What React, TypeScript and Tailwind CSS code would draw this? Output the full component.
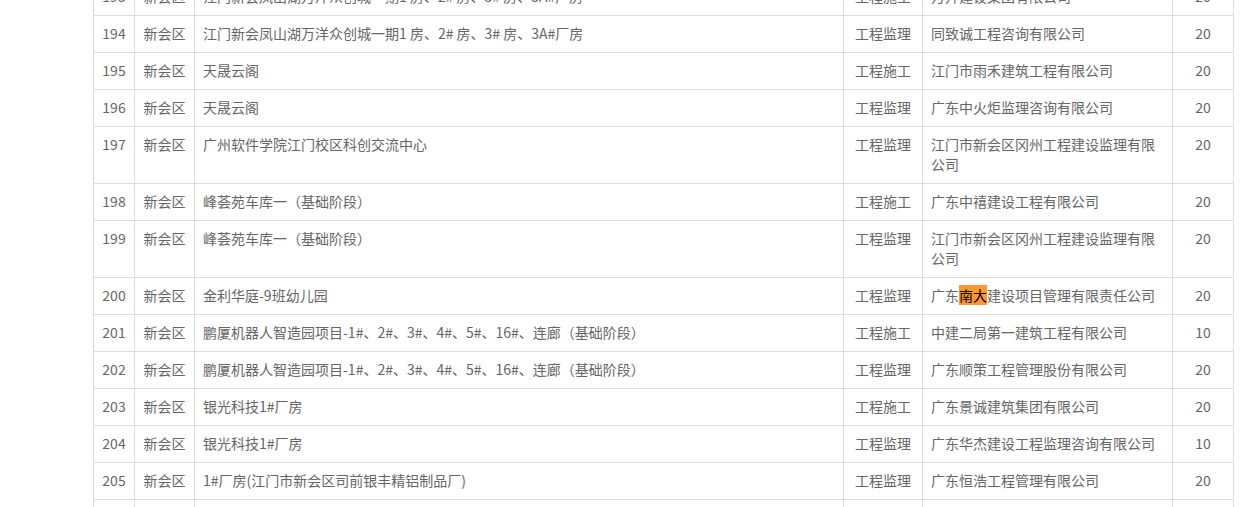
import React from "react";

type Row = {
  no: string;
  area: string;
  project: string;
  type: string;
  company: React.ReactNode;
  score: string;
};

const rows: Row[] = [
  { no: "193", area: "新会区", project: "江门新会凤山湖万洋众创城一期1 房、2# 房、3# 房、3A#厂房", type: "工程施工", company: "万升建设集团有限公司", score: "20" },
  { no: "194", area: "新会区", project: "江门新会凤山湖万洋众创城一期1 房、2# 房、3# 房、3A#厂房", type: "工程监理", company: "同致诚工程咨询有限公司", score: "20" },
  { no: "195", area: "新会区", project: "天晟云阁", type: "工程施工", company: "江门市雨禾建筑工程有限公司", score: "20" },
  { no: "196", area: "新会区", project: "天晟云阁", type: "工程监理", company: "广东中火炬监理咨询有限公司", score: "20" },
  { no: "197", area: "新会区", project: "广州软件学院江门校区科创交流中心", type: "工程监理", company: "江门市新会区冈州工程建设监理有限公司", score: "20" },
  { no: "198", area: "新会区", project: "峰荟苑车库一（基础阶段）", type: "工程施工", company: "广东中禧建设工程有限公司", score: "20" },
  { no: "199", area: "新会区", project: "峰荟苑车库一（基础阶段）", type: "工程监理", company: "江门市新会区冈州工程建设监理有限公司", score: "20" },
  {
    no: "200",
    area: "新会区",
    project: "金利华庭-9班幼儿园",
    type: "工程监理",
    company: (
      <>
        广东<span className="bg-[#ff9632] text-black">南大</span>建设项目管理有限责任公司
      </>
    ),
    score: "20",
  },
  { no: "201", area: "新会区", project: "鹏厦机器人智造园项目-1#、2#、3#、4#、5#、16#、连廊（基础阶段）", type: "工程施工", company: "中建二局第一建筑工程有限公司", score: "10" },
  { no: "202", area: "新会区", project: "鹏厦机器人智造园项目-1#、2#、3#、4#、5#、16#、连廊（基础阶段）", type: "工程监理", company: "广东顺策工程管理股份有限公司", score: "20" },
  { no: "203", area: "新会区", project: "银光科技1#厂房", type: "工程施工", company: "广东景诚建筑集团有限公司", score: "20" },
  { no: "204", area: "新会区", project: "银光科技1#厂房", type: "工程监理", company: "广东华杰建设工程监理咨询有限公司", score: "10" },
  { no: "205", area: "新会区", project: "1#厂房(江门市新会区司前银丰精铝制品厂)", type: "工程监理", company: "广东恒浩工程管理有限公司", score: "20" },
  { no: "206", area: "新会区", project: "1#厂房(江门市新会区司前银丰精铝制品厂)", type: "工程施工", company: "江门市建筑工程有限公司", score: "20" },
];

const td = "border border-[#dddddd] px-2 pt-[7px] pb-[9px] align-top";

export default function App() {
  return (
    <div
      className="h-[507px] w-[1260px] overflow-hidden bg-white"
      style={{ fontFamily: '"Noto Sans CJK SC", "Noto Sans", sans-serif' }}
    >
      <table className="ml-[93px] mt-[-22px] w-[1140px] table-fixed border-collapse text-[14px] leading-[20px] text-[#666666]">
        <colgroup>
          <col className="w-[41px]" />
          <col className="w-[60px]" />
          <col className="w-[649px]" />
          <col className="w-[79px]" />
          <col className="w-[250px]" />
          <col className="w-[61px]" />
        </colgroup>
        <tbody>
          {rows.map((r) => (
            <tr key={r.no}>
              <td className={`${td} text-center`}>{r.no}</td>
              <td className={`${td} text-center`}>{r.area}</td>
              <td className={`${td} text-left`}>{r.project}</td>
              <td className={`${td} text-center`}>{r.type}</td>
              <td className={`${td} text-left`}>{r.company}</td>
              <td className={`${td} text-center`}>{r.score}</td>
            </tr>
          ))}
        </tbody>
      </table>
    </div>
  );
}
